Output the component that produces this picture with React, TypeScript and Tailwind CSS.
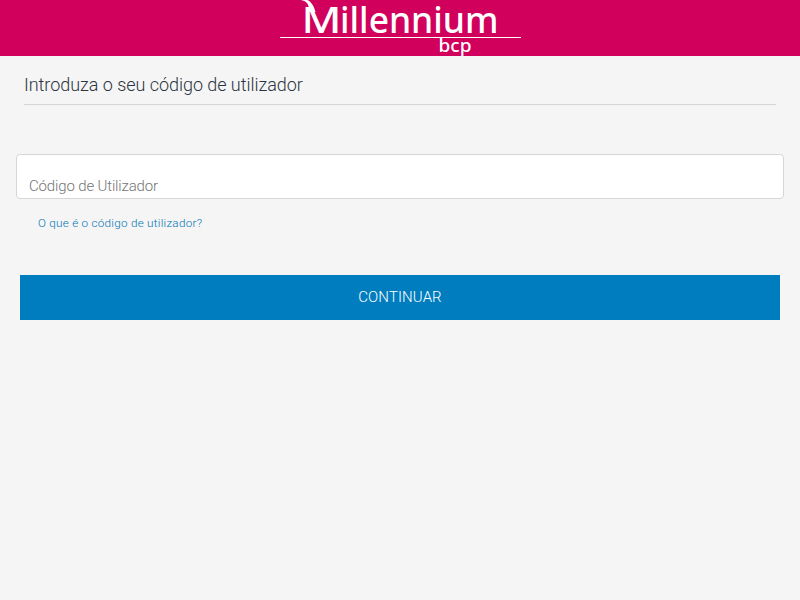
export default function App() {
  return (
    <div className="min-h-[600px] bg-[#f5f5f5] font-['Roboto',sans-serif] font-light">
      <header className="flex h-14 justify-center bg-[#d1005d]">
        <svg className="overflow-visible" width="240" height="56" viewBox="0 0 240 56" fill="#fff" role="img" aria-label="Millennium bcp">
          <path d="M21 0C26 1 28 3 29 8L30 12L35.5 12C34 6 31 1 27 0Z" />
          <text x="21.5" y="33" fontFamily="Noto Sans, sans-serif" fontWeight="500" fontSize="37" textLength="40" lengthAdjust="spacingAndGlyphs">M</text>
          <text x="60" y="33" fontFamily="Noto Sans, sans-serif" fontWeight="500" fontSize="37" textLength="158.5" lengthAdjust="spacingAndGlyphs">illennium</text>
          <rect x="0" y="37" width="241" height="1" />
          <rect x="160" y="38" width="2" height="13" />
          <text x="158.5" y="52" fontFamily="Noto Sans, sans-serif" fontWeight="500" fontSize="18.5" textLength="33" lengthAdjust="spacingAndGlyphs">bcp</text>
        </svg>
      </header>
      <main>
        <h1 className="mx-6 h-[49px] border-b border-[#d6d6d6] pt-[15px] text-[18px] leading-7 tracking-[-0.04px] text-[#2b3442]">
          Introduza o seu código de utilizador
        </h1>
        <form className="px-4 pt-[49px]" onSubmit={(e) => e.preventDefault()}>
          <input
            type="text"
            placeholder="Código de Utilizador"
            className="block h-[45px] w-full rounded border border-[#d6d6d6] bg-white px-3 pt-[19px] text-[15px] tracking-[-0.15px] text-[#333] outline-none placeholder:text-[#757575]"
          />
          <a href="#" className="mt-4 ml-[22px] block w-fit text-[11.7px] leading-4 tracking-[0.26px] text-[#0074b4]">
            O que é o código de utilizador?
          </a>
          <div className="px-1 pt-11">
            <button type="submit" className="h-[45px] w-full bg-[#007dbe] text-[15px] tracking-[0.1px] text-white">
              CONTINUAR
            </button>
          </div>
        </form>
      </main>
    </div>
  );
}
